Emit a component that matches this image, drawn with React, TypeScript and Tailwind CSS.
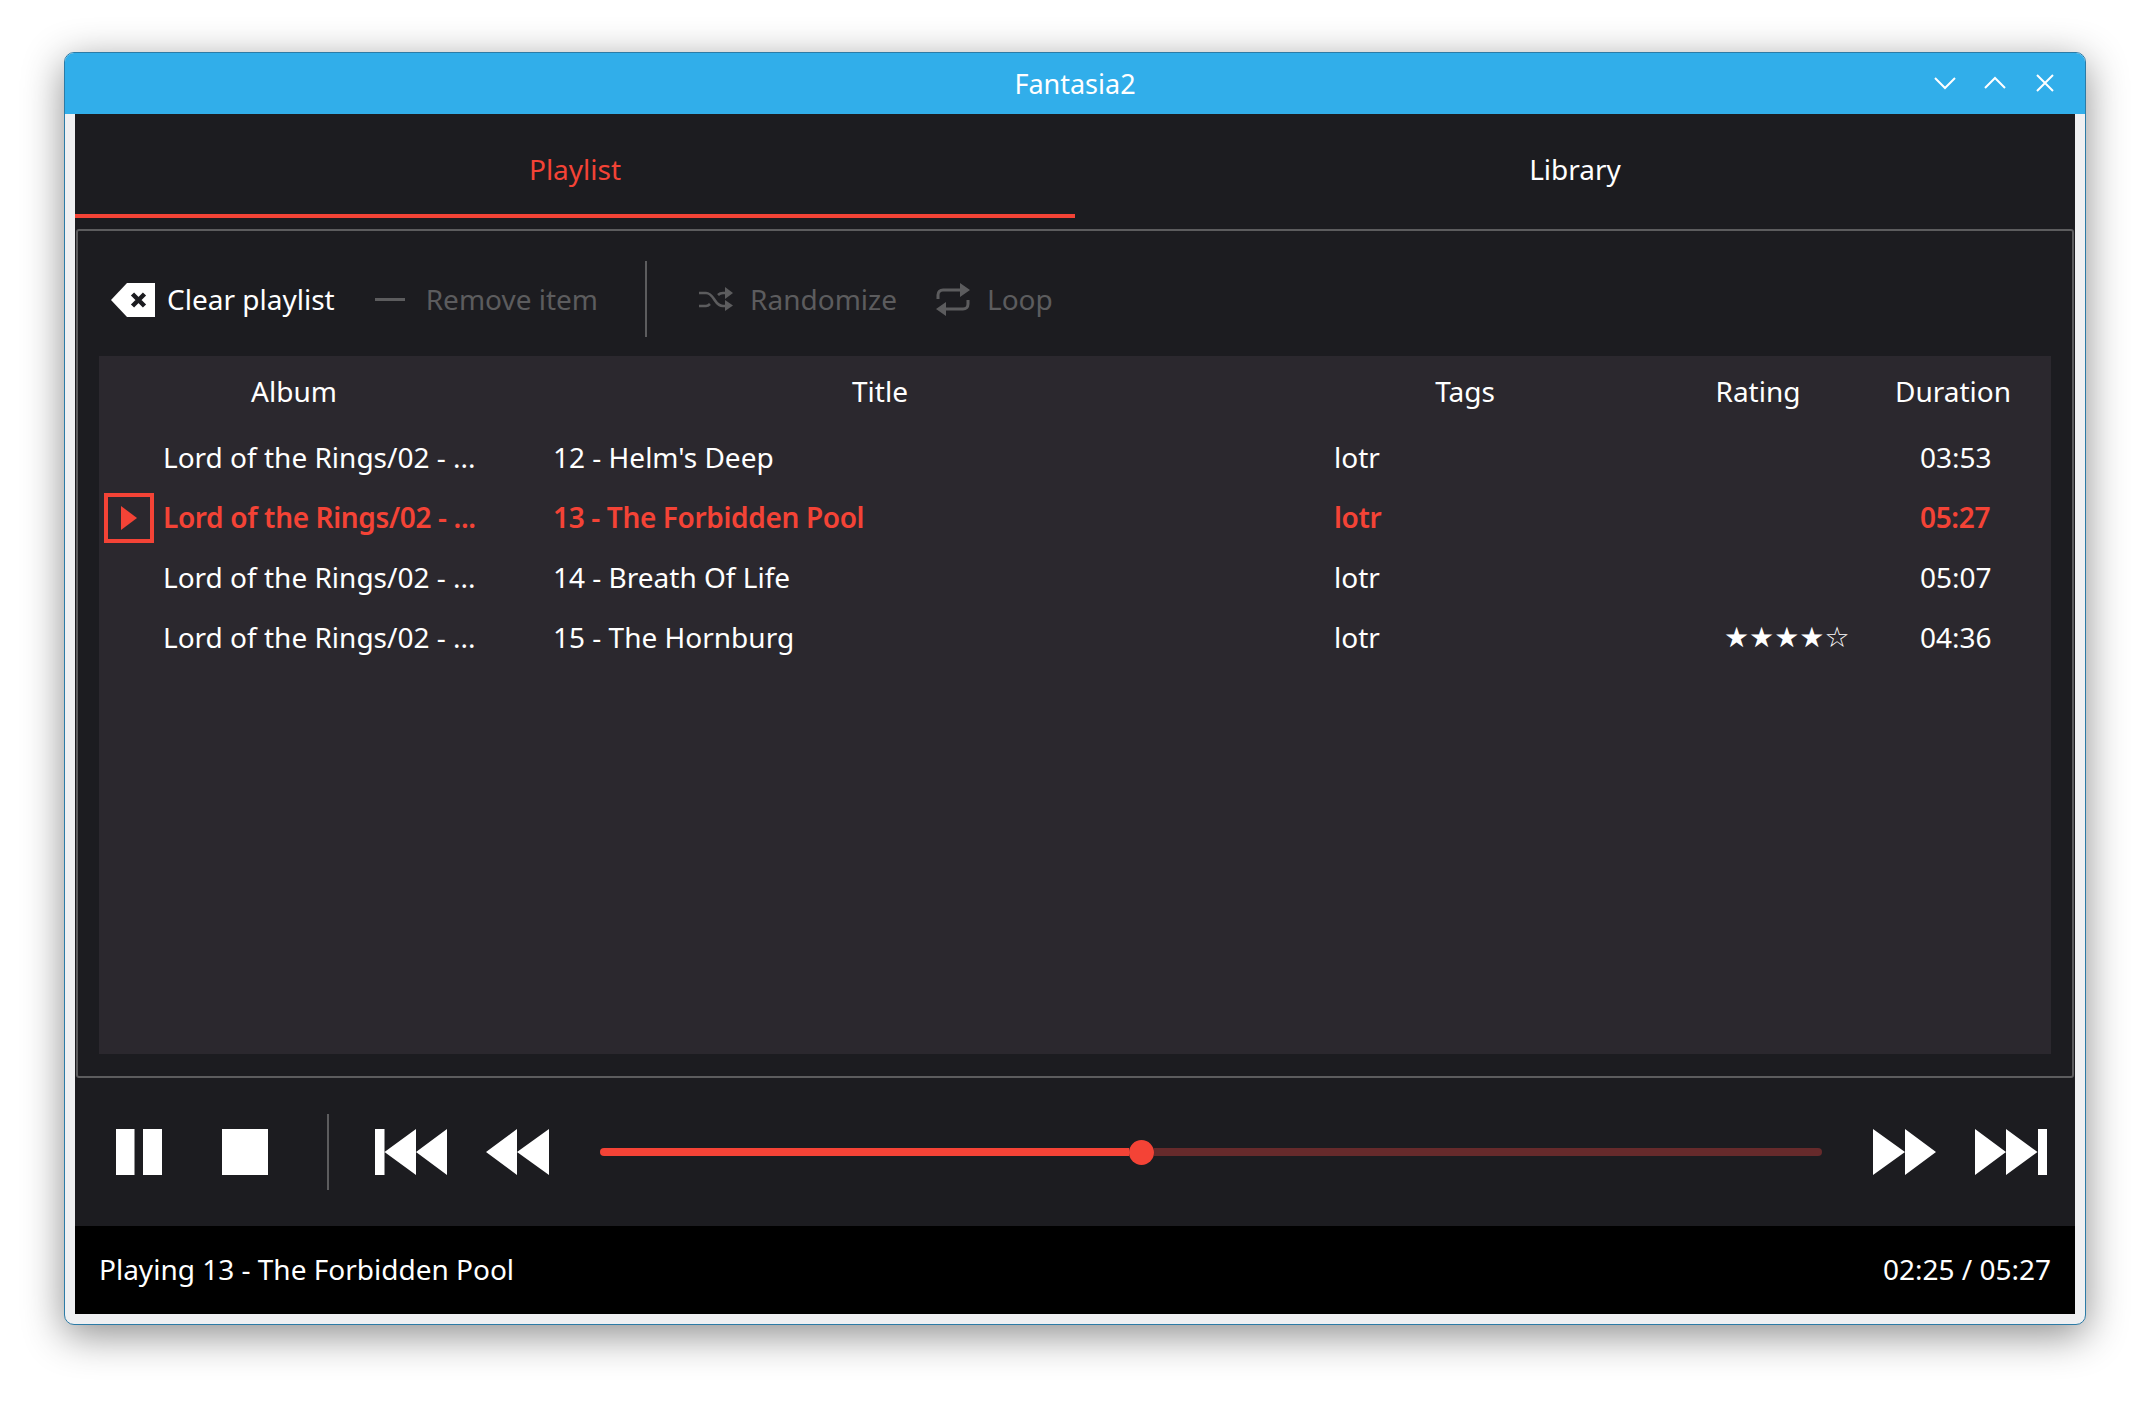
const FONT = "font-['Noto_Sans',sans-serif]";

const TRACKS = [
  { album: "Lord of the Rings/02 - ...", title: "12 - Helm's Deep", tags: "lotr", rating: "", duration: "03:53" },
  { album: "Lord of the Rings/02 - ...", title: "13 - The Forbidden Pool", tags: "lotr", rating: "", duration: "05:27", active: true },
  { album: "Lord of the Rings/02 - ...", title: "14 - Breath Of Life", tags: "lotr", rating: "", duration: "05:07" },
  { album: "Lord of the Rings/02 - ...", title: "15 - The Hornburg", tags: "lotr", rating: "★★★★☆", duration: "04:36" },
];

const COLUMNS = "grid grid-cols-[390px_782px_388px_198px_192px]";

function ClearIcon() {
  return (
    <svg width="44" height="34" viewBox="0 0 44 34" className="mt-[2px] shrink-0">
      <path d="M16 0H44V34H16L0 17Z" fill="#fff" />
      <path d="M21.500 11L33.500 23M33.500 11L21.500 23" stroke="#1c1c20" strokeWidth="4.500" fill="none" />
    </svg>
  );
}

function ShuffleIcon() {
  return (
    <svg width="34" height="24" viewBox="0 0 34 24" fill="none" className="shrink-0">
      <g stroke="#5c5c5e" strokeWidth="2.600">
        <path d="M0 6H7C11 6 13 9 15 12C17 15 19 19 24 19H28" />
        <path d="M0 19H7C9 19 10 18 11 17" />
        <path d="M19 8C20 7 22 6 24 6H28" />
      </g>
      <path d="M26 0L34 6L26 12ZM26 13L34 18.500L26 24Z" fill="#5c5c5e" />
    </svg>
  );
}

function RepeatIcon() {
  return (
    <svg width="34" height="33" viewBox="0 0 34 33" fill="none" className="shrink-0">
      <path d="M2 16V12C2 9 4 7 7 7H24M32 17V21C32 24 30 26 27 26H10" stroke="#5c5c5e" strokeWidth="3" />
      <path d="M24 0L34 7L24 14ZM10 19L0 26L10 33Z" fill="#5c5c5e" />
    </svg>
  );
}

function PauseIcon() {
  return (
    <svg width="46" height="46" viewBox="0 0 46 46" className="shrink-0">
      <path d="M0 0H18.500V46H0ZM27 0H46V46H27Z" fill="#fff" />
    </svg>
  );
}

function StopIcon() {
  return (
    <svg width="46" height="46" viewBox="0 0 46 46" className="shrink-0">
      <rect width="46" height="46" fill="#fff" />
    </svg>
  );
}

function SkipBackIcon() {
  return (
    <svg width="72" height="46" viewBox="0 0 72 46" className="shrink-0">
      <path d="M0 0H9.500V46H0ZM41 0V46L9.500 23ZM72 0V46L41 23Z" fill="#fff" />
    </svg>
  );
}

function RewindIcon() {
  return (
    <svg width="63" height="46" viewBox="0 0 63 46" className="shrink-0">
      <path d="M31 0V46L0 23ZM63 0V46L31 23Z" fill="#fff" />
    </svg>
  );
}

function ForwardIcon() {
  return (
    <svg width="63" height="46" viewBox="0 0 63 46" className="shrink-0">
      <path d="M0 0L32 23L0 46ZM32 0L63 23L32 46Z" fill="#fff" />
    </svg>
  );
}

function SkipForwardIcon() {
  return (
    <svg width="72" height="46" viewBox="0 0 72 46" className="shrink-0">
      <path d="M0 0L31 23L0 46ZM31 0L62.500 23L31 46ZM63 0H72V46H63Z" fill="#fff" />
    </svg>
  );
}

function Toolbar() {
  return (
    <div className="flex h-[125px] items-center pl-[33px] pt-[11px]">
      <ClearIcon />
      <span className="ml-[12px] text-white">Clear playlist</span>
      <div className="ml-[40px] h-[3px] w-[30px] bg-[#5c5c5e]" />
      <span className="ml-[21px] text-[#5c5c5e]">Remove item</span>
      <div className="ml-[47px] h-[76px] w-[2px] bg-[#5c5c5e]" />
      <div className="ml-[52px]">
        <ShuffleIcon />
      </div>
      <span className="ml-[17px] text-[#5c5c5e]">Randomize</span>
      <div className="ml-[39px]">
        <RepeatIcon />
      </div>
      <span className="ml-[17px] text-[#5c5c5e]">Loop</span>
    </div>
  );
}

function TrackTable() {
  return (
    <div className="mx-[21px] h-[698px] bg-[#2b282e] text-white">
      <div className={`${COLUMNS} h-[72px] items-center pb-[2px] text-center`}>
        <span>Album</span>
        <span>Title</span>
        <span>Tags</span>
        <span>Rating</span>
        <span>Duration</span>
      </div>
      {TRACKS.map((track) => (
        <div
          key={track.title}
          className={`${COLUMNS} h-[60px] items-center pb-[2px] ${track.active ? "font-semibold tracking-[-0.35px] text-[#f44336]" : ""}`}
        >
          <div className="flex items-center">
            <div className="flex w-[64px] pl-[5px]">
              {track.active && (
                <div className="mt-[2px] flex h-[50px] w-[50px] items-center justify-center border-4 border-[#f44336]">
                  <svg width="16" height="24" viewBox="0 0 16 24">
                    <path d="M0 0L16 12L0 24Z" fill="#f44336" />
                  </svg>
                </div>
              )}
            </div>
            <span>{track.album}</span>
          </div>
          <span className="pl-[64px]">{track.title}</span>
          <span className="pl-[63px]">{track.tags}</span>
          <span className="pl-[65px] pt-[2px] font-['DejaVu_Sans',sans-serif] text-[28px] leading-none">{track.rating}</span>
          <span className="pl-[63px]">{track.duration}</span>
        </div>
      ))}
    </div>
  );
}

function Slider() {
  return (
    <div className="ml-[51px] flex w-[1222px] items-center">
      <div className="h-[8px] w-[529px] rounded-l-full bg-[#f44336]" />
      <div className="h-[25px] w-[25px] rounded-full bg-[#f44336]" />
      <div className="h-[8px] flex-1 rounded-r-full bg-[#662a2b]" />
    </div>
  );
}

function Controls() {
  return (
    <div className="flex h-[148px] items-center pl-[41px]">
      <PauseIcon />
      <div className="ml-[60px]">
        <StopIcon />
      </div>
      <div className="ml-[59px] h-[76px] w-[2px] bg-[#5c5c5e]" />
      <div className="ml-[46px]">
        <SkipBackIcon />
      </div>
      <div className="ml-[39px]">
        <RewindIcon />
      </div>
      <Slider />
      <div className="ml-[51px]">
        <ForwardIcon />
      </div>
      <div className="ml-[39px]">
        <SkipForwardIcon />
      </div>
    </div>
  );
}

export default function App() {
  return (
    <div className={`h-[1401px] w-[2150px] bg-white pl-[64px] pt-[52px] text-[28px] leading-none ${FONT}`}>
      <div className="w-[2022px] overflow-hidden rounded-[10px] border border-[#2c7ba6] bg-[#eff0f2] shadow-[0_10px_40px_rgba(0,0,0,0.45)]">
        <div className="relative flex h-[61px] items-center justify-center bg-[#31aeea] text-[27px] text-white">
          <span>Fantasia2</span>
          <div className="absolute right-[30px] top-[20px] flex items-center gap-[28px]">
            <svg width="22" height="14" viewBox="0 0 22 14" fill="none" stroke="#fff" strokeWidth="2">
              <path d="M1 2L11 12L21 2" />
            </svg>
            <svg width="22" height="14" viewBox="0 0 22 14" fill="none" stroke="#fff" strokeWidth="2">
              <path d="M1 12L11 2L21 12" />
            </svg>
            <svg width="20" height="20" viewBox="0 0 20 20" fill="none" stroke="#fff" strokeWidth="2" className="ml-[1px]">
              <path d="M2 2L18 18M18 2L2 18" />
            </svg>
          </div>
        </div>
        <div className="px-[10px] pb-[10px]">
          <div className="bg-[#1c1c20]">
            <div className="grid h-[115px] grid-cols-2 pb-[11px]">
              <div className="flex items-center justify-center border-b-4 border-[#f44336] pt-[9px] text-[#f44336]">Playlist</div>
              <div className="flex items-center justify-center pt-[5px] text-white">Library</div>
            </div>
            <div className="mx-[1px] h-[849px] rounded-[3px] border-2 border-[#5c5c5e]">
              <Toolbar />
              <TrackTable />
            </div>
            <Controls />
            <div className="flex h-[88px] items-center justify-between bg-black px-[24px] pb-[2px] text-white">
              <span>Playing 13 - The Forbidden Pool</span>
              <span>02:25 / 05:27</span>
            </div>
          </div>
        </div>
      </div>
    </div>
  );
}
